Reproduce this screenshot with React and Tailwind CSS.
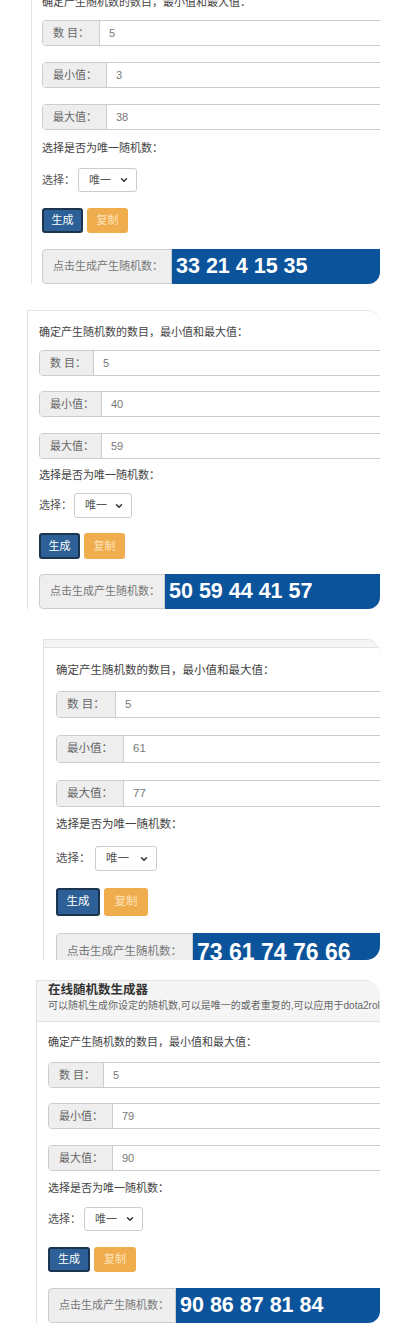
import React from 'react'
import { ChevronDown } from 'lucide-react'

const FONT = "font-['Liberation_Sans','Noto_Sans_CJK_SC',sans-serif]"
const LABELS = ['数 目：', '最小值：', '最大值：']

function Piece(p) {
  return (
    <div className={`${FONT} overflow-hidden bg-white border-l border-[#e2e2e2] ${p.box}`}>
      {p.header}
      <div className={p.pad}>
        <p className={`text-[#444] whitespace-nowrap ${p.fs} ${p.lh}`}>确定产生随机数的数目，最小值和最大值：</p>
        {LABELS.map((label, i) => (
          <div key={label} className={`flex w-[380px] border border-[#ccc] rounded-l-[4px] overflow-hidden ${p.mt[i]} ${p.rowH[i]}`}>
            <div className={`flex items-center shrink-0 bg-[#eee] border-r border-[#ccc] pl-[10px] text-[#666] ${p.addonW[i]} ${p.fs}`}>{label}</div>
            <div className={`flex items-center pl-[9px] text-[#777] ${p.fs}`}>{p.values[i]}</div>
          </div>
        ))}
        <p className={`text-[#444] whitespace-nowrap ${p.mt[3]} ${p.fs} ${p.lh}`}>选择是否为唯一随机数：</p>
        <div className={`flex items-center ${p.mt[4]}`}>
          <span className={`shrink-0 text-[#555] ${p.fs} ${p.selLabelW}`}>选择：</span>
          <div className={`flex items-center justify-between border border-[#ccc] rounded-[3px] bg-white pl-[10px] pr-[7px] text-[#555] ${p.fs} ${p.selCls}`}>
            <span>唯一</span>
            <ChevronDown size={10} strokeWidth={3.5} className="text-[#333]" />
          </div>
        </div>
        <div className={`flex gap-[4px] ${p.mt[5]}`}>
          <div className={`flex items-center justify-center rounded-[3px] bg-[#2d6096] border-2 border-[#1c344d] text-white ${p.fs} ${p.btnCls}`}>生成</div>
          <div className={`flex items-center justify-center rounded-[3px] bg-[#f0ad4e] text-[#fde4bd] ${p.fs} ${p.btnCls}`}>复制</div>
        </div>
        <div className={`flex w-[380px] ${p.mt[6]} ${p.resCls}`}>
          <div className={`flex items-center shrink-0 bg-[#eee] border border-[#ccc] rounded-l-[4px] pl-[10px] text-[#777] ${p.fs} ${p.resLabelW}`}>点击生成产生随机数：</div>
          <div className={`flex items-center flex-1 bg-[#0b549c] pl-[4px] text-white font-bold font-['Liberation_Sans',sans-serif] ${p.numCls}`}>{p.nums}</div>
        </div>
      </div>
    </div>
  )
}

export default function App() {
  return (
    <div className="w-[406px] h-[1344px] bg-white overflow-hidden">
      <Piece
        box="-mt-[6px] ml-[31px] w-[349px] rounded-br-[12px]"
        pad="pl-[10px]"
        fs="text-[11px]"
        lh="leading-[16px]"
        mt={['mt-[10px]', 'mt-[16px]', 'mt-[16px]', 'mt-[10px]', 'mt-[12px]', 'mt-[16px]', 'mt-[16px]']}
        rowH={['h-[26px]', 'h-[26px]', 'h-[26px]']}
        addonW={['w-[57px]', 'w-[64px]', 'w-[64px]']}
        values={['5', '3', '38']}
        selLabelW="w-[36px]"
        selCls="w-[59px] h-[24px]"
        btnCls="w-[41px] h-[25px]"
        resCls="h-[35px]"
        resLabelW="w-[130px]"
        numCls="text-[21.5px]"
        nums="33 21 4 15 35"
      />
      <Piece
        box="mt-[26px] ml-[27px] w-[353px] border-t border-t-[#e6e6e6] rounded-tr-[12px] rounded-br-[12px]"
        pad="pl-[11px] pt-[13px]"
        fs="text-[11px]"
        lh="leading-[16px]"
        mt={['mt-[10px]', 'mt-[15px]', 'mt-[16px]', 'mt-[8px]', 'mt-[10px]', 'mt-[15px]', 'mt-[15px]']}
        rowH={['h-[26px]', 'h-[26px]', 'h-[26px]']}
        addonW={['w-[54px]', 'w-[62px]', 'w-[62px]']}
        values={['5', '40', '59']}
        selLabelW="w-[35px]"
        selCls="w-[58px] h-[25px]"
        btnCls="w-[41px] h-[26px]"
        resCls="h-[35px]"
        resLabelW="w-[126px]"
        numCls="text-[21.5px]"
        nums="50 59 44 41 57"
      />
      <Piece
        box="mt-[30px] ml-[43px] w-[337px] h-[321px] border-t border-t-[#e2e2e2] rounded-tr-[14px] rounded-br-[14px]"
        header={<div className="h-[8px] bg-[#f5f5f5] border-b border-[#e2e2e2]" />}
        pad="pl-[12px] pt-[14px]"
        fs="text-[11.5px]"
        lh="leading-[17px]"
        mt={['mt-[12px]', 'mt-[17px]', 'mt-[17px]', 'mt-[9px]', 'mt-[13px]', 'mt-[17px]', 'mt-[17px]']}
        rowH={['h-[27px]', 'h-[28px]', 'h-[27px]']}
        addonW={['w-[59px]', 'w-[67px]', 'w-[67px]']}
        values={['5', '61', '77']}
        selLabelW="w-[39px]"
        selCls="w-[62px] h-[25px]"
        btnCls="w-[44px] h-[28px]"
        resCls="h-[38px]"
        resLabelW="w-[137px]"
        numCls="text-[23px]"
        nums="73 61 74 76 66"
      />
      <Piece
        box="mt-[20px] ml-[36px] w-[344px] border-t border-t-[#e2e2e2] rounded-tr-[16px] rounded-br-[12px]"
        header={
          <div className="bg-[#f5f5f5] border-b border-[#e2e2e2] pl-[11px] pb-[8px]">
            <h2 className="text-[12.5px] leading-[18px] font-bold text-[#333]">在线随机数生成器</h2>
            <p className="text-[10px] leading-[14px] text-[#666] whitespace-nowrap">可以随机生成你设定的随机数,可以是唯一的或者重复的,可以应用于dota2roll点等游戏</p>
          </div>
        }
        pad="pl-[11px] pt-[12px]"
        fs="text-[11px]"
        lh="leading-[16px]"
        mt={['mt-[12px]', 'mt-[15px]', 'mt-[16px]', 'mt-[9px]', 'mt-[11px]', 'mt-[16px]', 'mt-[16px]']}
        rowH={['h-[26px]', 'h-[26px]', 'h-[26px]']}
        addonW={['w-[55px]', 'w-[64px]', 'w-[64px]']}
        values={['5', '79', '90']}
        selLabelW="w-[36px]"
        selCls="w-[59px] h-[24px]"
        btnCls="w-[42px] h-[25px]"
        resCls="h-[35px]"
        resLabelW="w-[128px]"
        numCls="text-[21.5px]"
        nums="90 86 87 81 84"
      />
    </div>
  )
}
